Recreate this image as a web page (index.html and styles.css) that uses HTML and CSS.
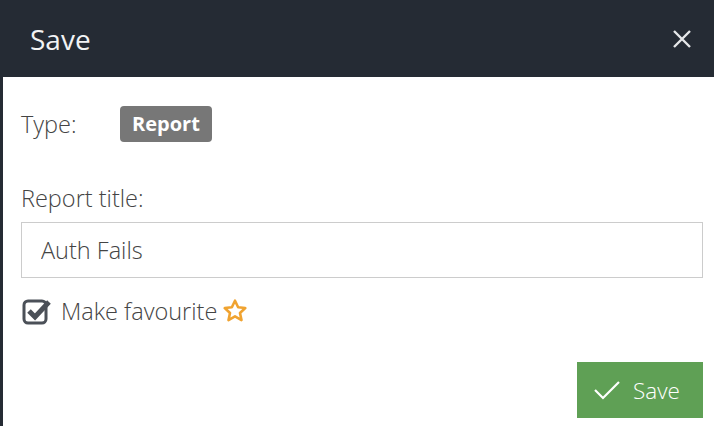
FILE: index.html
```html
<!DOCTYPE html>
<html>
<head>
<meta charset="utf-8">
<link rel="stylesheet" href="styles.css">
</head>
<body>
<div class="dialog">
  <header class="dialog-header">
    <h1 class="dialog-title">Save</h1>
    <button class="close" aria-label="Close">
      <svg width="20" height="20" viewBox="0 0 20 20"><path d="M2 2L18 18M18 2L2 18" stroke="#e6e7e9" stroke-width="2.4" fill="none"/></svg>
    </button>
  </header>
  <div class="dialog-body">
    <div class="type-row">
      <span class="type-label">Type:</span>
      <span class="badge">Report</span>
    </div>
    <label class="field-label" for="title">Report title:</label>
    <input class="text-input" id="title" type="text" value="Auth Fails">
    <div class="fav-row">
      <svg class="check" width="30" height="28" viewBox="0 0 30 28">
        <rect x="2" y="4" width="22" height="22" rx="4" fill="none" stroke="#4b5058" stroke-width="3"/>
        <path d="M7 14L13 20L27 5" fill="none" stroke="#4b5058" stroke-width="5" stroke-linejoin="miter"/>
      </svg>
      <span class="fav-text">Make favourite</span>
      <svg class="star" width="26" height="26" viewBox="0 0 24 24"><path d="M12 2.5L14.9 8.6L21.5 9.3L16.6 13.8L18 20.4L12 17L6 20.4L7.4 13.8L2.5 9.3L9.1 8.6Z" fill="none" stroke="#f0a330" stroke-width="2.4" stroke-linejoin="round"/></svg>
    </div>
    <div class="actions">
      <button class="btn-save">
        <svg width="28" height="22" viewBox="0 0 28 22"><path d="M2 11L10 19L26 3" fill="none" stroke="#fff" stroke-width="2.2"/></svg>
        <span>Save</span>
      </button>
    </div>
  </div>
</div>
</body>
</html>
```
FILE: styles.css
```css
html, body {
  margin: 0;
  padding: 0;
  background: #fff;
  font-family: "Open Sans", "Liberation Sans", sans-serif;
}
.dialog {
  width: 714px;
  height: 426px;
  overflow: hidden;
}
.dialog-header {
  height: 77px;
  background: #252b34;
  display: flex;
  align-items: center;
  justify-content: space-between;
  padding: 0 22px 0 30px;
  box-sizing: border-box;
}
.dialog-title {
  margin: 0;
  font-weight: 400;
  font-size: 28px;
  color: #f2f3f4;
  line-height: 1;
}
.close {
  background: none;
  border: 0;
  padding: 0;
  display: flex;
}
.dialog-body {
  border-left: 3px solid #252b34;
  height: 349px;
  box-sizing: border-box;
  padding: 29px 11px 0 18px;
  display: flex;
  flex-direction: column;
}
.type-row {
  display: flex;
  align-items: center;
  height: 36px;
}
.type-label {
  width: 99px;
  font-size: 23.5px;
  font-weight: 300;
  color: #444;
}
.badge {
  background: #777;
  color: #fff;
  font-weight: 700;
  font-size: 20px;
  border-radius: 4px;
  padding: 0 12px;
  height: 36px;
  line-height: 36px;
  box-sizing: border-box;
}
.field-label {
  margin-top: 42px;
  font-size: 23.5px;
  font-weight: 300;
  color: #444;
  line-height: 28px;
}
.text-input {
  margin-top: 10px;
  height: 56px;
  box-sizing: border-box;
  border: 1px solid #ccc;
  padding: 0 19px;
  font-family: inherit;
  font-size: 23.5px;
  font-weight: 300;
  color: #444;
  outline: none;
}
.fav-row {
  margin-top: 18px;
  display: flex;
  align-items: center;
  height: 30px;
}
.check {
  margin-left: 1px;
}
.fav-text {
  margin-left: 9px;
  font-size: 23.5px;
  font-weight: 300;
  color: #444;
}
.star {
  margin-left: 5px;
}
.actions {
  margin-top: 36px;
  display: flex;
  justify-content: flex-end;
}
.btn-save {
  width: 126px;
  height: 56px;
  background: #5fa055;
  border: 0;
  color: #fff;
  font-family: inherit;
  font-size: 22.5px;
  font-weight: 300;
  display: flex;
  align-items: center;
  padding: 0 0 0 16px;
  gap: 12px;
}
```
